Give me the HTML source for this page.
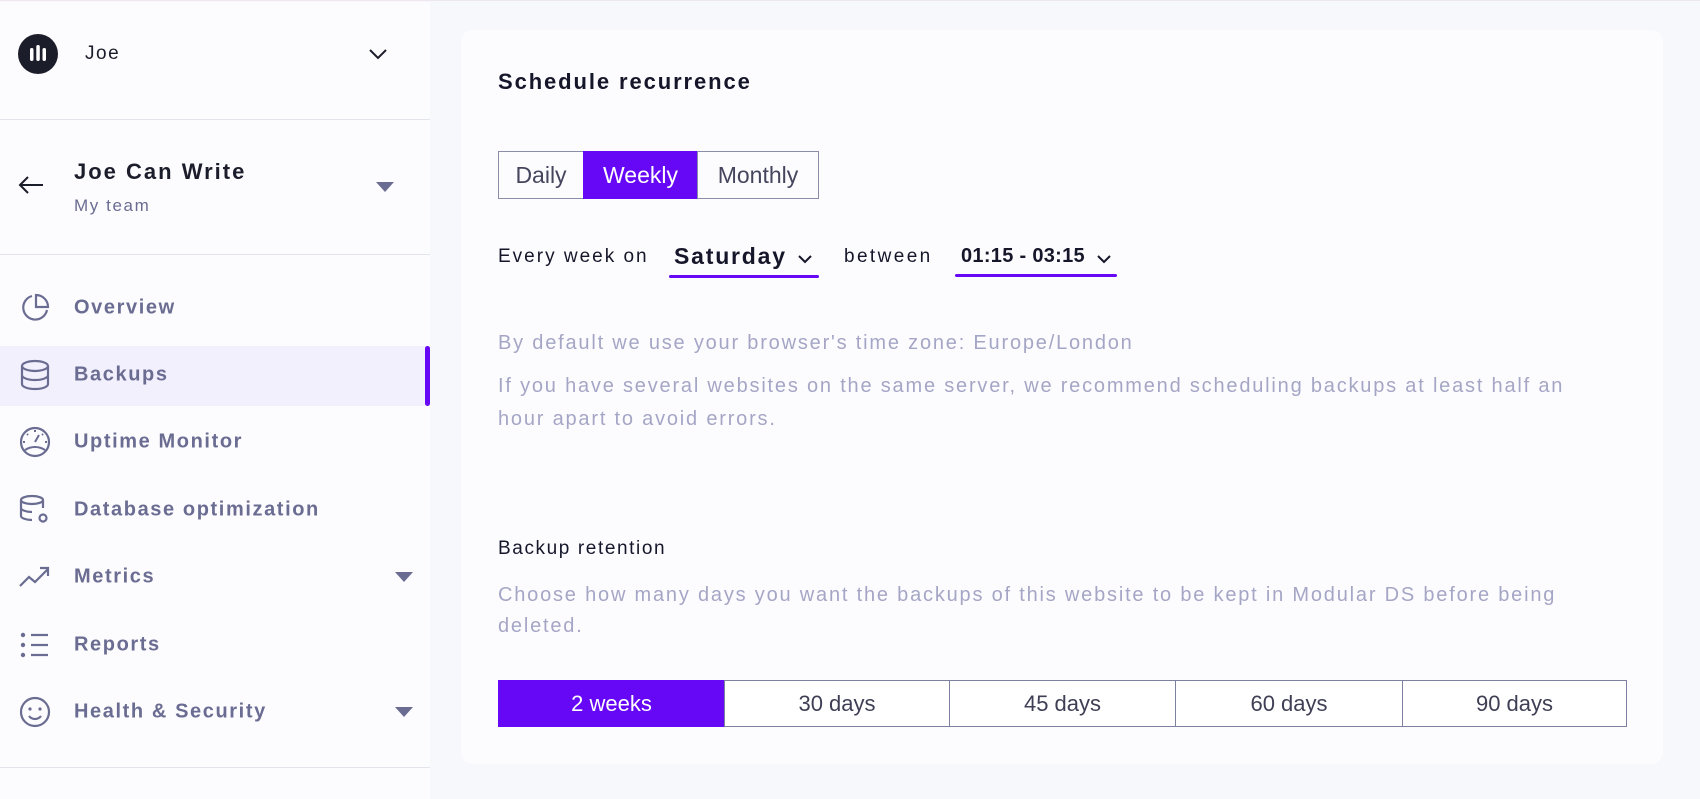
<!DOCTYPE html>
<html><head><meta charset="utf-8"><style>
*{box-sizing:border-box;margin:0;padding:0}
body{width:1700px;height:798px;overflow:hidden;background:#f7f8fc;font-family:"Liberation Sans",sans-serif;position:relative;border-top:1px solid #efe6f0}
.sb{position:absolute;left:0;top:1px;width:430px;height:797px;background:#fcfcfe}
.a{position:absolute;white-space:nowrap}
.hr{position:absolute;left:0;width:430px;height:1px;background:#e4e4ec}
.nav{position:absolute;left:74px;font-size:20px;font-weight:bold;color:#6a6c92;transform:translateY(-50%);letter-spacing:1.6px}
.ic{position:absolute;left:18px;width:34px;height:34px;transform:translateY(-50%)}
.tri{position:absolute;width:0;height:0;border-left:9px solid transparent;border-right:9px solid transparent;border-top:10px solid #6a6c92}
.card{position:absolute;left:461px;top:29px;width:1202px;height:734px;background:#fcfcfe;border-radius:12px}
.seg{position:absolute;top:150px;height:48px;border:1px solid #8b8ca8;font-size:23px;color:#45465e;display:flex;align-items:center;justify-content:center}
.gray{position:absolute;left:498px;font-size:20px;color:#a5a6c6;white-space:nowrap;letter-spacing:1.8px}
.ret{position:absolute;top:679px;height:47px;border:1px solid #7e80a0;font-size:22px;color:#3e3f55;display:flex;align-items:center;justify-content:center;background:#fff}
</style></head><body>
<div class="sb">
 <svg class="a" style="left:18px;top:32px" width="40" height="40" viewBox="0 0 40 40"><circle cx="20" cy="20" r="20" fill="#1c1d2b"/><rect x="12" y="14" width="3.5" height="13" rx="1.7" fill="#fff"/><rect x="18.3" y="11" width="3.5" height="16" rx="1.7" fill="#fff"/><rect x="24.5" y="14" width="3.5" height="13" rx="1.7" fill="#fff"/></svg>
 <div class="a" style="left:85px;top:41px;font-size:19px;color:#1c1d2b;letter-spacing:1.5px">Joe</div>
 <svg class="a" style="left:368px;top:46px" width="20" height="12" viewBox="0 0 20 12"><path d="M2 2l8 8 8-8" stroke="#1c1d2b" stroke-width="2" fill="none"/></svg>
 <div class="hr" style="top:117px"></div>
 <svg class="a" style="left:17px;top:173px" width="28" height="20" viewBox="0 0 28 20"><path d="M26 10H3M11 2L3 10l8 8" stroke="#1c1d2b" stroke-width="2" fill="none"/></svg>
 <div class="a" style="left:74px;top:157px;font-size:22px;font-weight:bold;color:#1c1d2b;letter-spacing:2px">Joe Can Write</div>
 <div class="a" style="left:74px;top:194px;font-size:17px;color:#6a6c92;letter-spacing:1.6px">My team</div>
 <div class="tri" style="left:376px;top:180px"></div>
 <div class="hr" style="top:252px"></div>

 <svg class="ic" style="top:306px" viewBox="0 0 34 34"><path d="M14 5a12 12 0 1 0 15 14" stroke="#6a6c92" stroke-width="2.2" fill="none"/><path d="M18 4v12h12A12 12 0 0 0 18 4z" stroke="#6a6c92" stroke-width="2.2" fill="none"/></svg>
 <div class="nav" style="top:306px">Overview</div>

 <div class="a" style="left:0;top:344px;width:430px;height:60px;background:#f3f0fd"></div>
 <div class="a" style="left:425px;top:344px;width:5px;height:60px;background:#6607f6;border-radius:3px"></div>
 <svg class="ic" style="top:373px" viewBox="0 0 34 34"><ellipse cx="17" cy="8" rx="13" ry="5" stroke="#6a6c92" stroke-width="2.2" fill="none"/><path d="M4 8v18c0 3 6 5 13 5s13-2 13-5V8M4 17c0 3 6 5 13 5s13-2 13-5" stroke="#6a6c92" stroke-width="2.2" fill="none"/></svg>
 <div class="nav" style="top:373px">Backups</div>

 <svg class="ic" style="top:440px" viewBox="0 0 34 34"><circle cx="17" cy="17" r="14" stroke="#6a6c92" stroke-width="2.2" fill="none"/><path d="M17 17l4-7M7 25c6-4 14-4 20 0M17 5v2M9 9l1 1M25 9l-1 1M5 17h2M27 17h2" stroke="#6a6c92" stroke-width="2" fill="none"/></svg>
 <div class="nav" style="top:440px">Uptime Monitor</div>

 <svg class="ic" style="top:508px" viewBox="0 0 34 34"><ellipse cx="14" cy="7" rx="11" ry="4" stroke="#6a6c92" stroke-width="2.2" fill="none"/><path d="M3 7v16c0 2 5 4 11 4M3 15c0 2 5 4 11 4M25 7v8" stroke="#6a6c92" stroke-width="2.2" fill="none"/><circle cx="25" cy="25" r="3.5" stroke="#6a6c92" stroke-width="2.2" fill="none"/></svg>
 <div class="nav" style="top:508px">Database optimization</div>

 <svg class="ic" style="top:575px" viewBox="0 0 34 34"><path d="M2 26l9-9 6 5 13-13M22 8h8v8" stroke="#6a6c92" stroke-width="2.2" fill="none"/></svg>
 <div class="nav" style="top:575px">Metrics</div>
 <div class="tri" style="left:395px;top:570px"></div>

 <svg class="ic" style="top:643px" viewBox="0 0 34 34"><circle cx="5" cy="7" r="2.2" fill="#6a6c92"/><circle cx="5" cy="17" r="2.2" fill="#6a6c92"/><circle cx="5" cy="27" r="2.2" fill="#6a6c92"/><path d="M13 7h17M13 17h17M13 27h17" stroke="#6a6c92" stroke-width="2.2"/></svg>
 <div class="nav" style="top:643px">Reports</div>

 <svg class="ic" style="top:710px" viewBox="0 0 34 34"><circle cx="17" cy="17" r="14" stroke="#6a6c92" stroke-width="2.2" fill="none"/><circle cx="12" cy="14" r="1.6" fill="#6a6c92"/><circle cx="22" cy="14" r="1.6" fill="#6a6c92"/><path d="M11 21c3 4 9 4 12 0" stroke="#6a6c92" stroke-width="2.2" fill="none"/></svg>
 <div class="nav" style="top:710px">Health &amp; Security</div>
 <div class="tri" style="left:395px;top:705px"></div>
 <div class="hr" style="top:765px"></div>
</div>

<div class="card"></div>
<div class="a" style="left:498px;top:68px;font-size:22px;font-weight:bold;color:#15162a;letter-spacing:1.9px">Schedule recurrence</div>
<div class="seg" style="left:498px;width:86px">Daily</div>
<div class="seg" style="left:583px;width:115px;background:#6607f6;border-color:#6607f6;color:#fff">Weekly</div>
<div class="seg" style="left:697px;width:122px">Monthly</div>

<div class="a" style="left:498px;top:245px;font-size:19px;color:#15162a;letter-spacing:2px">Every week on</div>
<div class="a" style="left:674px;top:242px;font-size:23px;font-weight:bold;color:#15162a;letter-spacing:1.8px">Saturday</div>
<svg class="a" style="left:797px;top:253px" width="16" height="10" viewBox="0 0 16 10"><path d="M2 2l6 6 6-6" stroke="#15162a" stroke-width="2" fill="none"/></svg>
<div class="a" style="left:669px;top:274px;width:150px;height:3px;background:#6607f6;border-radius:2px"></div>
<div class="a" style="left:844px;top:245px;font-size:19px;color:#15162a;letter-spacing:2.4px">between</div>
<div class="a" style="left:961px;top:244px;font-size:20px;font-weight:bold;color:#15162a;letter-spacing:0.3px">01:15 - 03:15</div>
<svg class="a" style="left:1096px;top:253px" width="16" height="10" viewBox="0 0 16 10"><path d="M2 2l6 6 6-6" stroke="#15162a" stroke-width="2" fill="none"/></svg>
<div class="a" style="left:955px;top:273px;width:162px;height:3px;background:#6607f6;border-radius:2px"></div>

<div class="gray" style="top:331px">By default we use your browser's time zone: Europe/London</div>
<div class="gray" style="top:374px">If you have several websites on the same server, we recommend scheduling backups at least half an</div>
<div class="gray" style="top:407px">hour apart to avoid errors.</div>

<div class="a" style="left:498px;top:537px;font-size:19px;color:#15162a;letter-spacing:1.6px">Backup retention</div>
<div class="gray" style="top:583px">Choose how many days you want the backups of this website to be kept in Modular DS before being</div>
<div class="gray" style="top:614px">deleted.</div>

<div class="ret" style="left:498px;width:227px;background:#6607f6;border-color:#6607f6;color:#fff">2 weeks</div>
<div class="ret" style="left:724px;width:226px">30 days</div>
<div class="ret" style="left:949px;width:227px">45 days</div>
<div class="ret" style="left:1175px;width:228px">60 days</div>
<div class="ret" style="left:1402px;width:225px">90 days</div>
</body></html>
